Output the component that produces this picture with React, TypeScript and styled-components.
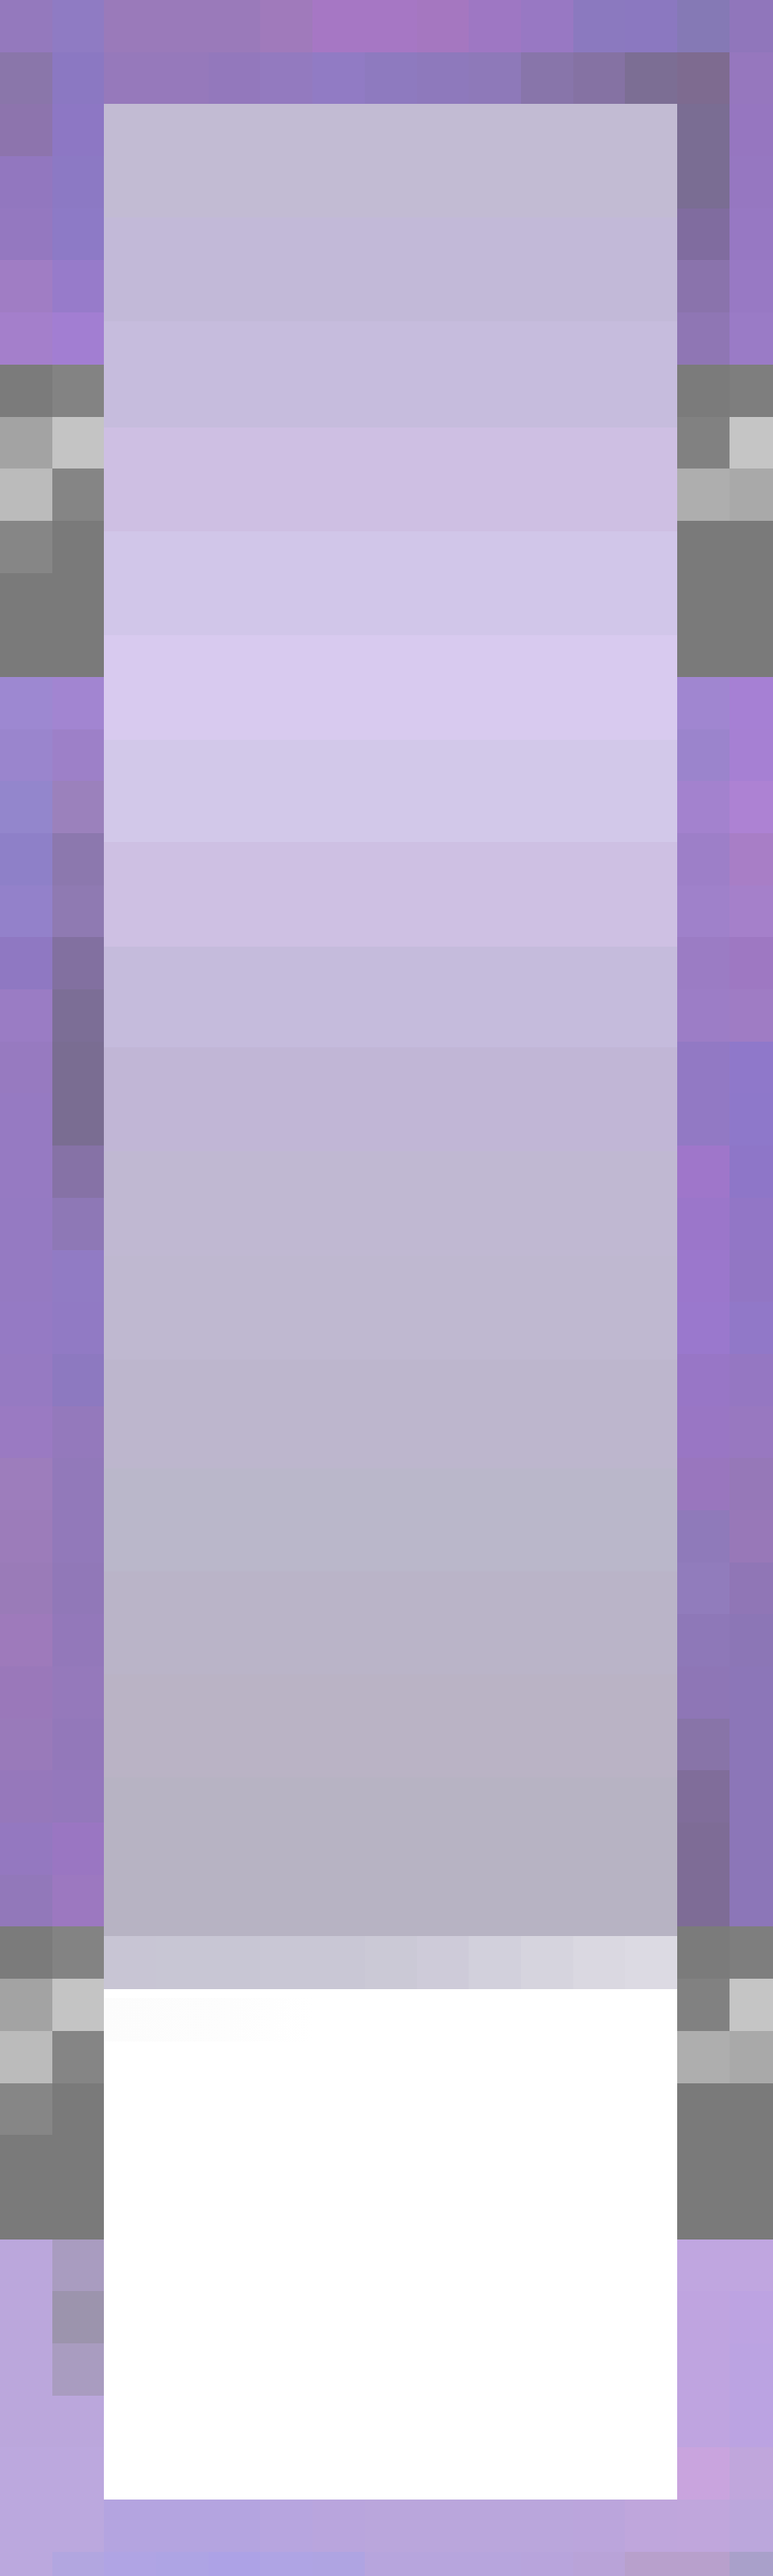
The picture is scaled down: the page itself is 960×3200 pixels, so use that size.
import styled, { createGlobalStyle } from 'styled-components'

const GlobalStyle = createGlobalStyle`
  html, body {
    margin: 0;
    padding: 0;
    background: #ffffff;
  }
`

const CELL = 64.7

const gray = [
  ['#7b7b7b', '#838383', '#7b7b7b', '#7e7e7e'],
  ['#a3a3a3', '#c4c4c4', '#818181', '#c5c5c5'],
  ['#bbbbbb', '#858585', '#aeaeae', '#a9a9a9'],
  ['#868686', '#7a7a7a', '#7a7a7a', '#7a7a7a'],
  ['#7a7a7a', '#7a7a7a', '#7a7a7a', '#7a7a7a'],
  ['#7a7a7a', '#7a7a7a', '#7a7a7a', '#7a7a7a'],
]

// full width rows above and below the panel
const topRows = [
  ['#9479bd', '#8f7bc3', '#9a7aba', '#9a7aba', '#9a7aba', '#a07abb', '#a677c4', '#a677c4', '#a577c0', '#9e77c3', '#9878c3', '#8b79bf', '#8b78c0', '#8579b5', '#9076bb'],
  ['#8a76aa', '#8b78c2', '#9679bb', '#9679bb', '#9378bc', '#937abf', '#917bc4', '#8e7abf', '#8e79bc', '#8e79b9', '#8875aa', '#8572a3', '#7c6e94', '#7e6b90', '#9677be'],
]

const bottomRows = [
  ['#bba8de', '#bba8de', '#b4a4e0', '#b4a4e0', '#b4a4e0', '#b7a5df', '#b9a5dd', '#baa6dc', '#baa6dc', '#baa6dc', '#baa6dc', '#bba5dc', '#bfa6dc', '#c0a6dc', '#bba7dc'],
  ['#bba8de', '#b2a6e0', '#b0a4e4', '#aea4e4', '#ada2e6', '#afa4e4', '#afa4e2', '#b7a5dd', '#b7a5dd', '#b7a5dd', '#b8a4dc', '#b9a3d8', '#b8a0cc', '#b8a0cc', '#a9a0ca'],
]

// two cells left of the panel, two right of it
const sideRows = [
  ['#8d74ad', '#8d77c4', '#7a6d93', '#9676c0'],
  ['#9277bf', '#8c79c4', '#7a6d93', '#9677c1'],
  ['#9478c0', '#8d7ac6', '#806c9f', '#9778c3'],
  ['#a07dc4', '#977bca', '#8a73ac', '#9879c4'],
  ['#a47fcb', '#a27ed2', '#8f76b4', '#9a7bc6'],
  ...gray,
  ['#9d88d1', '#a285d1', '#a086d0', '#a680d4'],
  ['#9a85cd', '#9d80c8', '#9b84cc', '#a680d3'],
  ['#9386cc', '#9b81bc', '#a382ce', '#ad82d3'],
  ['#8e80c8', '#8c78ae', '#9d7fc8', '#a87ec6'],
  ['#9381ca', '#8f7ab2', '#9f81ca', '#a580ca'],
  ['#8f78c2', '#8270a0', '#9b7cc4', '#9e78c2'],
  ['#9a7cc4', '#7c6e96', '#9c7dc6', '#9f7cc4'],
  ['#977ac0', '#7a6d92', '#9279c4', '#8f78ca'],
  ['#967ac2', '#7a6d92', '#9279c4', '#8e78ca'],
  ['#967ac2', '#8672a6', '#9f76ca', '#8e76c8'],
  ['#957ac2', '#8e78b6', '#9b76ca', '#9276c6'],
  ['#957ac2', '#917bc4', '#9b77cc', '#9276c4'],
  ['#957ac4', '#917ac4', '#9a78cd', '#9178c8'],
  ['#967ac2', '#8d79c0', '#9876c6', '#9577c2'],
  ['#9a7ac2', '#9479bc', '#9976c4', '#9878c0'],
  ['#9d7dbc', '#9279ba', '#9976be', '#9678b8'],
  ['#9c7cba', '#9279ba', '#8f7aba', '#9878b8'],
  ['#9a7bb8', '#9178b8', '#917cbc', '#9076b6'],
  ['#9e7abb', '#9378ba', '#8e78b8', '#8c76b6'],
  ['#9a78ba', '#9579bb', '#8e76b6', '#8c76b8'],
  ['#997aba', '#9378ba', '#8874a8', '#8c76b8'],
  ['#9678bb', '#9478bc', '#806d9a', '#8c76b8'],
  ['#9478c0', '#9a76c2', '#7e6c96', '#8c76b8'],
  ['#9278ba', '#9c78c0', '#7e6c96', '#8c76b8'],
  ...gray,
  ['#bba7dc', '#a99cc0', '#c0a6e0', '#c0a6e0'],
  ['#bba7dc', '#9c94ad', '#bfa4e0', '#bda3e2'],
  ['#bba7dc', '#a99cc0', '#bfa4e0', '#bba3e2'],
  ['#bba7dc', '#bba7dc', '#bfa4e0', '#bba3e2'],
  ['#bca8de', '#bca8de', '#c9a4de', '#c0a6dc'],
]

const bands = [
  { color: '#c2bbd3', height: 141 },
  { color: '#c2b9d8', height: 129 },
  { color: '#c6bcdd', height: 132 },
  { color: '#cebfe3', height: 129 },
  { color: '#d1c6e9', height: 129 },
  { color: '#d8caef', height: 130 },
  { color: '#d2c8e9', height: 127 },
  { color: '#cec0e3', height: 130 },
  { color: '#c5bbdc', height: 125 },
  { color: '#c1b6d6', height: 129 },
  { color: '#c0b8d2', height: 130 },
  { color: '#bfb8d0', height: 129 },
  { color: '#bdb6cd', height: 135 },
  { color: '#bab7ca', height: 128 },
  { color: '#bab4c8', height: 128 },
  { color: '#bab3c5', height: 128 },
  { color: '#b7b3c3', height: 197 },
]

const stripTiles = ['#c8c5d4', '#c8c6d4', '#c8c6d4', '#c9c7d5', '#c9c7d5', '#cbc9d6', '#cecbd9', '#d2d0dc', '#d6d4de', '#dad8e1', '#dcdae3']

const Canvas = styled.div`
  width: 960px;
  height: 3200px;
  overflow: hidden;
`

const Mosaic = styled.div`
  display: grid;
  grid-template-columns: repeat(15, ${CELL}px);
  grid-auto-rows: ${CELL}px;
`

const Cell = styled.div<{ $color: string }>`
  background: ${(p) => p.$color};
`

const Panel = styled.div`
  grid-column: 3 / 14;
  grid-row: 3 / 49;
  display: flex;
  flex-direction: column;
`

const Band = styled.div<{ $color: string; $height: number }>`
  height: ${(p) => p.$height}px;
  flex: none;
  background: ${(p) => p.$color};
`

const Strip = styled.div`
  height: 66px;
  flex: none;
  display: grid;
  grid-template-columns: repeat(11, 1fr);
`

const WhiteArea = styled.div`
  flex: 1;
  background: #ffffff;
  padding-top: 11px;
`

const FaintTiles = styled.div`
  width: 260px;
  height: 54px;
  background: linear-gradient(90deg, #fcfcfc, #fdfdfd 60%, #ffffff);
`

export default function App() {
  return (
    <>
      <GlobalStyle />
      <Canvas>
        <Mosaic>
          <Panel>
            {bands.map((band, i) => (
              <Band key={i} $color={band.color} $height={band.height} />
            ))}
            <Strip>
              {stripTiles.map((color, i) => (
                <Cell key={i} $color={color} />
              ))}
            </Strip>
            <WhiteArea>
              <FaintTiles />
            </WhiteArea>
          </Panel>
          {[...topRows, ...sideRows, ...bottomRows].flat().map((color, i) => (
            <Cell key={i} $color={color} />
          ))}
        </Mosaic>
      </Canvas>
    </>
  )
}
